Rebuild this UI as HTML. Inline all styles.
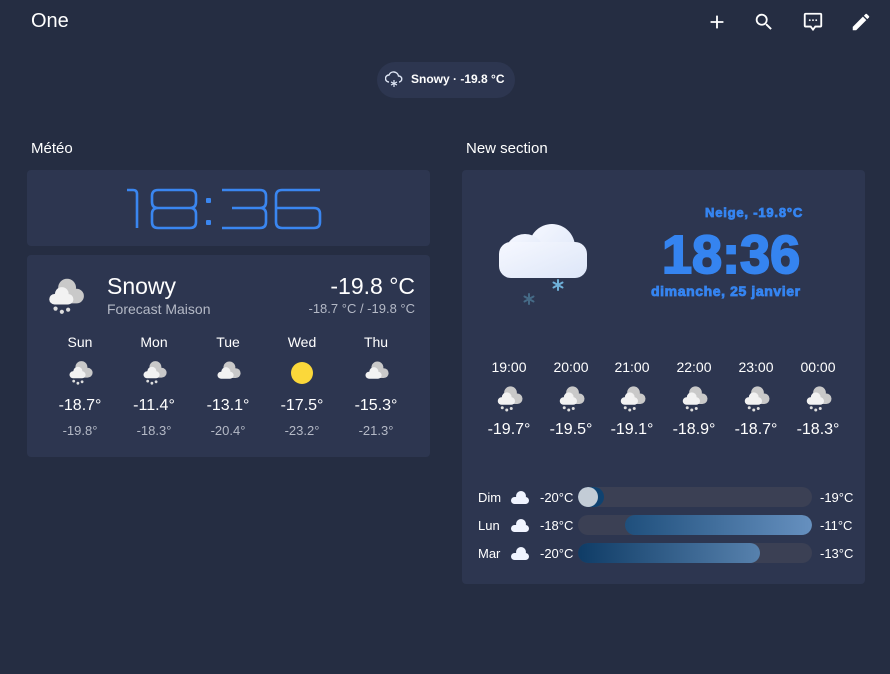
<!DOCTYPE html><html><head><meta charset="utf-8"><style>
*{margin:0;padding:0;box-sizing:border-box}
body{width:890px;height:674px;background:#252d42;font-family:"Liberation Sans",sans-serif;color:#fff;position:relative;overflow:hidden}
.a{position:absolute;white-space:nowrap}
.card{position:absolute;background:#2d3650;border-radius:4px}
.c{text-align:center}
.bar{position:absolute;left:578px;width:234px;height:20px;border-radius:10px;background:#3b4054;overflow:hidden}
.bl{color:#3584f0;font-weight:bold;-webkit-text-stroke:0.8px #3584f0}
</style></head><body>
<svg width="0" height="0" style="position:absolute"><defs>
<symbol id="sn" viewBox="0 0 40 40"><circle cx="22" cy="13" r="8.5" fill="#c9c9c9"/><rect x="10" y="14" width="28" height="14" rx="7" fill="#c9c9c9"/><circle cx="17" cy="19" r="6.5" fill="#f2f2f2"/><rect x="5" y="19" width="23" height="10" rx="5" fill="#f2f2f2"/><circle cx="11" cy="33" r="2" fill="#ddd"/><circle cx="17" cy="36" r="2" fill="#ddd"/><circle cx="23" cy="34" r="2" fill="#ddd"/></symbol>
<symbol id="cl" viewBox="0 0 40 40"><circle cx="22" cy="15" r="8.5" fill="#c9c9c9"/><rect x="10" y="16" width="28" height="14" rx="7" fill="#c9c9c9"/><circle cx="17" cy="21" r="6.5" fill="#f2f2f2"/><rect x="5" y="21" width="23" height="10" rx="5" fill="#f2f2f2"/></symbol>
<symbol id="wc" viewBox="0 0 20 16"><circle cx="11" cy="6" r="5" fill="#f0f4ff"/><rect x="1" y="7" width="18" height="7" rx="3.5" fill="#f0f4ff"/></symbol>
</defs></svg>

<div class="a" style="left:31px;top:10px;font-size:20px">One</div>
<svg class="a" style="left:706px;top:11px" width="22" height="22" viewBox="0 0 24 24"><path d="M19 13h-6v6h-2v-6H5v-2h6V5h2v6h6v2z" fill="#fff"/></svg>
<svg class="a" style="left:753px;top:11px" width="22" height="22" viewBox="0 0 24 24"><path d="M15.5 14h-.79l-.28-.27A6.470 6.470 0 0016 9.5 6.5 6.5 0 109.5 16c1.610 0 3.090-.59 4.230-1.57l.27.28v.79l5 4.990L20.490 19l-4.990-5zm-6 0C7.010 14 5 11.990 5 9.5S7.010 5 9.5 5 14 7.010 14 9.5 11.990 14 9.5 14z" fill="#fff"/></svg>
<svg class="a" style="left:802px;top:11px" width="22" height="22" viewBox="0 0 24 24"><path d="M4 2h16a2 2 0 012 2v12a2 2 0 01-2 2h-5l-3 4-3-4H4a2 2 0 01-2-2V4a2 2 0 012-2zm0 2v12h6l2 2.7 2-2.7h6V4H4z" fill="#fff"/><circle cx="8.5" cy="10" r="1" fill="#fff"/><circle cx="12" cy="10" r="1" fill="#fff"/><circle cx="15.5" cy="10" r="1" fill="#fff"/></svg>
<svg class="a" style="left:850px;top:11px" width="22" height="22" viewBox="0 0 24 24"><path d="M3 17.250V21h3.750L17.810 9.940l-3.750-3.750L3 17.250zM20.710 7.040a1 1 0 000-1.410l-2.340-2.340a1 1 0 00-1.410 0l-1.830 1.830 3.750 3.750 1.830-1.830z" fill="#fff"/></svg>

<div class="a" style="left:377px;top:62px;width:138px;height:36px;border-radius:18px;background:#2d3650"></div>
<svg class="a" style="left:385px;top:70px" width="18" height="20" viewBox="0 0 18 20"><path d="M4 12a3.5 3.5 0 010-7 5 5 0 019.5 1A3 3 0 0114 12" fill="none" stroke="#dfe6f5" stroke-width="1.4"/><path d="M9 10v7M6 12l6 3M12 12l-6 3" stroke="#dfe6f5" stroke-width="1.2"/></svg>
<div class="a" style="left:411px;top:72px;font-size:12px;font-weight:bold">Snowy · -19.8 °C</div>

<div class="a" style="left:31px;top:140px;font-size:15px">Météo</div>
<div class="a" style="left:466px;top:140px;font-size:15px">New section</div>

<div class="card" style="left:27px;top:170px;width:403px;height:76px"></div>
<svg class="a" style="left:0;top:0" width="430" height="250"><g fill="none" stroke="#3a86f0" stroke-width="2.6" stroke-linejoin="round">
<path d="M127 190h6q4 0 4 4v34"/>
<path d="M158 190h32q6 0 6 6v6q0 6-6 6h-32q-6 0-6-6v-6q0-6 6-6zM158 208h32q6 0 6 6v8q0 6-6 6h-32q-6 0-6-6v-8q0-6 6-6z"/>
<path d="M222 190h38q6 0 6 6v6q0 6-6 6h-28M260 208q6 0 6 6v8q0 6-6 6h-38"/>
<path d="M320 190h-38q-6 0-6 6v26q0 6 6 6h32q6 0 6-6v-8q0-6-6-6h-38"/></g>
<rect x="206" y="198" width="5" height="5" rx="1" fill="#3a86f0"/><rect x="206" y="220" width="5" height="5" rx="1" fill="#3a86f0"/></svg>

<div class="card" style="left:27px;top:255px;width:403px;height:202px"></div>
<svg class="a" style="left:44px;top:274px" width="42" height="42"><use href="#sn"/></svg>
<div class="a" style="left:107px;top:273px;font-size:23px">Snowy</div>
<div class="a" style="left:107px;top:301px;font-size:14px;color:#b4b9c6">Forecast Maison</div>
<div class="a" style="right:475px;top:273px;font-size:23px">-19.8 °C</div>
<div class="a" style="right:475px;top:301px;font-size:13px;color:#b4b9c6">-18.7 °C / -19.8 °C</div>

<div class="a c" style="left:50px;top:334px;width:60px;font-size:14px">Sun</div>
<div class="a c" style="left:124px;top:334px;width:60px;font-size:14px">Mon</div>
<div class="a c" style="left:198px;top:334px;width:60px;font-size:14px">Tue</div>
<div class="a c" style="left:272px;top:334px;width:60px;font-size:14px">Wed</div>
<div class="a c" style="left:346px;top:334px;width:60px;font-size:14px">Thu</div>
<svg class="a" style="left:66px;top:358px" width="28" height="28"><use href="#sn"/></svg>
<svg class="a" style="left:140px;top:358px" width="28" height="28"><use href="#sn"/></svg>
<svg class="a" style="left:214px;top:357px" width="28" height="28"><use href="#cl"/></svg>
<svg class="a" style="left:288px;top:359px" width="28" height="28"><circle cx="14" cy="14" r="11" fill="#fbd83a"/></svg>
<svg class="a" style="left:362px;top:357px" width="28" height="28"><use href="#cl"/></svg>
<div class="a c" style="left:45px;top:397px;width:70px;font-size:16px">-18.7°</div>
<div class="a c" style="left:119px;top:397px;width:70px;font-size:16px">-11.4°</div>
<div class="a c" style="left:193px;top:397px;width:70px;font-size:16px">-13.1°</div>
<div class="a c" style="left:267px;top:397px;width:70px;font-size:16px">-17.5°</div>
<div class="a c" style="left:341px;top:397px;width:70px;font-size:16px">-15.3°</div>
<div class="a c" style="left:45px;top:423px;width:70px;font-size:13px;color:#b4b9c6">-19.8°</div>
<div class="a c" style="left:119px;top:423px;width:70px;font-size:13px;color:#b4b9c6">-18.3°</div>
<div class="a c" style="left:193px;top:423px;width:70px;font-size:13px;color:#b4b9c6">-20.4°</div>
<div class="a c" style="left:267px;top:423px;width:70px;font-size:13px;color:#b4b9c6">-23.2°</div>
<div class="a c" style="left:341px;top:423px;width:70px;font-size:13px;color:#b4b9c6">-21.3°</div>

<div class="card" style="left:462px;top:170px;width:403px;height:414px"></div>
<svg class="a" style="left:495px;top:218px" width="100" height="90"><defs><linearGradient id="g" x1="0" y1="0" x2="1" y2="1"><stop offset="0" stop-color="#f6f8ff"/><stop offset="1" stop-color="#dde6f8"/></linearGradient></defs>
<circle cx="57" cy="29" r="23" fill="url(#g)"/><circle cx="30" cy="36" r="20" fill="url(#g)"/><rect x="4" y="24" width="88" height="36" rx="12" fill="url(#g)"/>
<g stroke="#6fb0d8" stroke-width="2" stroke-linecap="round"><path d="M63 62v10M58.5 64.5l9 5M58.5 69.5l9-5"/></g>
<g stroke="#456a86" stroke-width="2" stroke-linecap="round"><path d="M34 76v10M29.5 78.5l9 5M29.5 83.5l9-5"/></g></svg>
<div class="a bl" style="left:705px;top:205px;font-size:13px;letter-spacing:0.8px">Neige, -19.8°C</div>
<div class="a bl" style="left:662px;top:224px;font-size:54px;letter-spacing:0px;-webkit-text-stroke:2px #3584f0">18:36</div>
<div class="a bl" style="left:651px;top:283px;font-size:14px;letter-spacing:0.6px">dimanche, 25 janvier</div>

<div class="a c" style="left:479px;top:359px;width:60px;font-size:14px">19:00</div>
<div class="a c" style="left:541px;top:359px;width:60px;font-size:14px">20:00</div>
<div class="a c" style="left:602px;top:359px;width:60px;font-size:14px">21:00</div>
<div class="a c" style="left:664px;top:359px;width:60px;font-size:14px">22:00</div>
<div class="a c" style="left:726px;top:359px;width:60px;font-size:14px">23:00</div>
<div class="a c" style="left:788px;top:359px;width:60px;font-size:14px">00:00</div>
<svg class="a" style="left:494px;top:383px" width="30" height="30"><use href="#sn"/></svg>
<svg class="a" style="left:556px;top:383px" width="30" height="30"><use href="#sn"/></svg>
<svg class="a" style="left:617px;top:383px" width="30" height="30"><use href="#sn"/></svg>
<svg class="a" style="left:679px;top:383px" width="30" height="30"><use href="#sn"/></svg>
<svg class="a" style="left:741px;top:383px" width="30" height="30"><use href="#sn"/></svg>
<svg class="a" style="left:803px;top:383px" width="30" height="30"><use href="#sn"/></svg>
<div class="a c" style="left:474px;top:421px;width:70px;font-size:16px">-19.7°</div>
<div class="a c" style="left:536px;top:421px;width:70px;font-size:16px">-19.5°</div>
<div class="a c" style="left:597px;top:421px;width:70px;font-size:16px">-19.1°</div>
<div class="a c" style="left:659px;top:421px;width:70px;font-size:16px">-18.9°</div>
<div class="a c" style="left:721px;top:421px;width:70px;font-size:16px">-18.7°</div>
<div class="a c" style="left:783px;top:421px;width:70px;font-size:16px">-18.3°</div>

<div class="a" style="left:478px;top:490px;font-size:13px">Dim</div>
<div class="a" style="left:478px;top:518px;font-size:13px">Lun</div>
<div class="a" style="left:478px;top:546px;font-size:13px">Mar</div>
<svg class="a" style="left:510px;top:490px" width="20" height="16"><use href="#wc"/></svg>
<svg class="a" style="left:510px;top:518px" width="20" height="16"><use href="#wc"/></svg>
<svg class="a" style="left:510px;top:546px" width="20" height="16"><use href="#wc"/></svg>
<div class="a" style="left:540px;top:490px;font-size:13px">-20°C</div>
<div class="a" style="left:540px;top:518px;font-size:13px">-18°C</div>
<div class="a" style="left:540px;top:546px;font-size:13px">-20°C</div>
<div class="bar" style="top:487px"><div style="position:absolute;left:0;width:26px;height:20px;border-radius:10px;background:#0f4270"></div><div style="position:absolute;left:0;width:20px;height:20px;border-radius:10px;background:#c3ccd6"></div></div>
<div class="bar" style="top:515px"><div style="position:absolute;left:47px;right:0;height:20px;border-radius:10px;background:linear-gradient(90deg,#1f4f7c,#6690bf)"></div></div>
<div class="bar" style="top:543px"><div style="position:absolute;left:0;width:182px;height:20px;border-radius:10px;background:linear-gradient(90deg,#0f3c66,#5781ad)"></div></div>
<div class="a" style="left:820px;top:490px;font-size:13px">-19°C</div>
<div class="a" style="left:820px;top:518px;font-size:13px">-11°C</div>
<div class="a" style="left:820px;top:546px;font-size:13px">-13°C</div>
</body></html>
